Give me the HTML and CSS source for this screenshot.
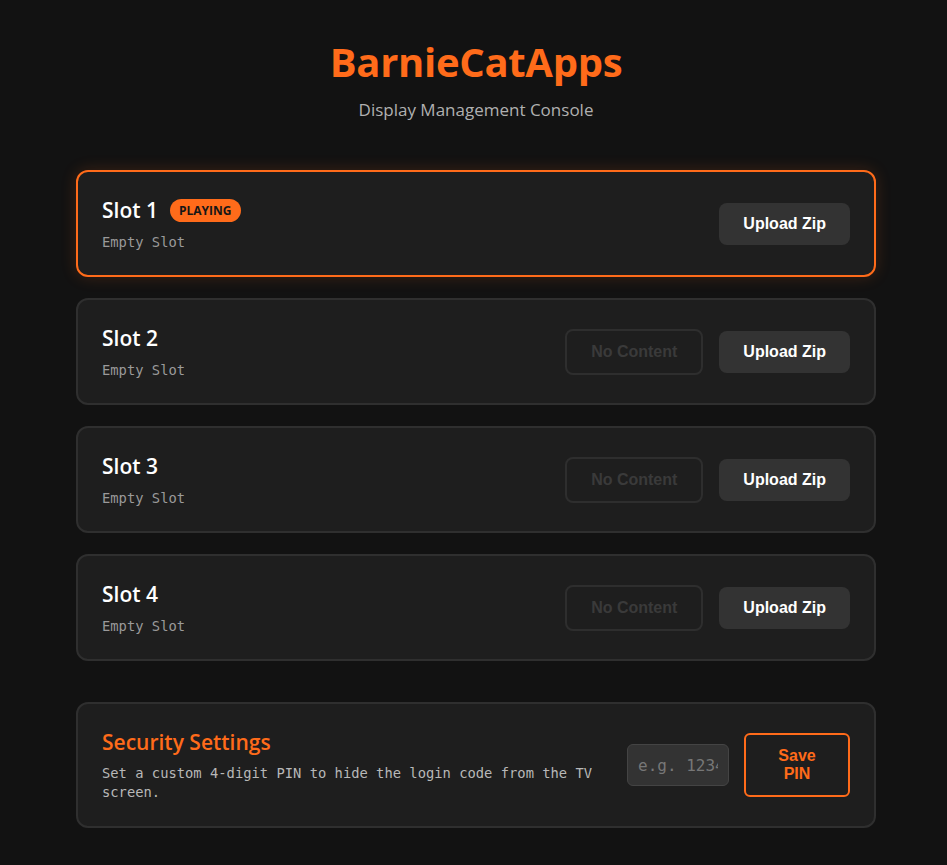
FILE: index.html
```html
<!DOCTYPE html>
<html lang="en">
<head>
<meta charset="utf-8">
<title>BarnieCatApps</title>
<link rel="stylesheet" href="styles.css">
</head>
<body>
<div class="container">
  <header class="header">
    <h1 class="brand">BarnieCatApps</h1>
    <p class="tagline">Display Management Console</p>
  </header>

  <section class="slots">
    <div class="card card-active">
      <div class="card-info">
        <div class="slot-title">Slot 1 <span class="badge">PLAYING</span></div>
        <div class="slot-sub">Empty Slot</div>
      </div>
      <div class="card-actions">
        <button class="btn btn-upload">Upload Zip</button>
      </div>
    </div>
    <div class="card">
      <div class="card-info">
        <div class="slot-title">Slot 2</div>
        <div class="slot-sub">Empty Slot</div>
      </div>
      <div class="card-actions">
        <button class="btn btn-disabled" disabled>No Content</button>
        <button class="btn btn-upload">Upload Zip</button>
      </div>
    </div>
    <div class="card">
      <div class="card-info">
        <div class="slot-title">Slot 3</div>
        <div class="slot-sub">Empty Slot</div>
      </div>
      <div class="card-actions">
        <button class="btn btn-disabled" disabled>No Content</button>
        <button class="btn btn-upload">Upload Zip</button>
      </div>
    </div>
    <div class="card">
      <div class="card-info">
        <div class="slot-title">Slot 4</div>
        <div class="slot-sub">Empty Slot</div>
      </div>
      <div class="card-actions">
        <button class="btn btn-disabled" disabled>No Content</button>
        <button class="btn btn-upload">Upload Zip</button>
      </div>
    </div>
  </section>

  <section class="card security">
    <div class="card-info security-info">
      <div class="security-title">Security Settings</div>
      <div class="slot-sub security-text">Set a custom 4-digit PIN to hide the login code from the TV screen.</div>
    </div>
    <div class="card-actions security-actions">
      <input class="pin-input" type="text" placeholder="e.g. 1234">
      <button class="btn btn-save">Save PIN</button>
    </div>
  </section>
</div>
</body>
</html>
```

FILE: styles.css
```css
* { box-sizing: border-box; }

body {
  margin: 0;
  padding: 38px 0 40px 5px;
  background: #121212;
  color: #fff;
  font-family: "Open Sans", "Noto Sans", sans-serif;
}

.container {
  width: 800px;
  margin: 0 auto;
}

.header {
  text-align: center;
  margin-bottom: 49px;
}

.brand {
  margin: 0;
  font-size: 40px;
  font-weight: 700;
  color: #ff6b1a;
  line-height: 1.2;
  letter-spacing: -0.3px;
}

.tagline {
  margin: 12px 0 0;
  font-size: 17px;
  color: #b0b0b0;
}

.slots {
  display: flex;
  flex-direction: column;
  gap: 21px;
}

.card {
  display: flex;
  align-items: center;
  justify-content: space-between;
  background: #1e1e1e;
  border: 2px solid #2f2f2f;
  border-radius: 12px;
  padding: 24px;
  min-height: 107px;
}

.card-active {
  border-color: #ff6b1a;
  box-shadow: 0 0 16px rgba(255, 107, 26, 0.18);
}

.slot-title {
  display: flex;
  align-items: center;
  gap: 12px;
  font-size: 21px;
  font-weight: 600;
  color: #fff;
  line-height: 28px;
}

.badge {
  background: #ff6b1a;
  color: #161616;
  font-size: 12px;
  font-weight: 700;
  padding: 2px 9px;
  border-radius: 12px;
  line-height: 19px;
}

.slot-sub {
  margin-top: 10px;
  font-family: "DejaVu Sans Mono", "Liberation Mono", monospace;
  font-size: 13.8px;
  line-height: 17px;
  color: #9a9a9a;
}

.card-actions {
  display: flex;
  align-items: center;
  gap: 16px;
}

.btn {
  font-family: "Liberation Sans", Arial, sans-serif;
  font-size: 16px;
  font-weight: 700;
  border-radius: 8px;
  padding: 12px 24px;
  cursor: pointer;
}

.btn-upload {
  background: #333;
  color: #fff;
  border: none;
  height: 42px;
}

.btn-disabled {
  background: transparent;
  color: #3a3a3a;
  border: 2px solid #2e2e2e;
  height: 46px;
}

.security {
  margin-top: 41px;
  min-height: 126px;
}

.security-title {
  font-size: 21px;
  font-weight: 600;
  color: #ff6b1a;
  line-height: 28px;
}

.security-text {
  max-width: 510px;
  margin-top: 8px;
  line-height: 19px;
  color: #b8b8b8;
}

.security-actions {
  gap: 15px;
}

.pin-input {
  width: 102px;
  height: 42px;
  background: #333;
  border: 1px solid #444;
  border-radius: 6px;
  padding: 0 10px;
  font-family: "DejaVu Sans Mono", "Liberation Mono", monospace;
  font-size: 16px;
  color: #fff;
}

.pin-input::placeholder { color: #777; }

.btn-save {
  width: 106px;
  padding: 12px 20px;
  background: transparent;
  border: 2px solid #ff6b1a;
  border-radius: 6px;
  color: #ff6b1a;
  line-height: 18px;
}
```
